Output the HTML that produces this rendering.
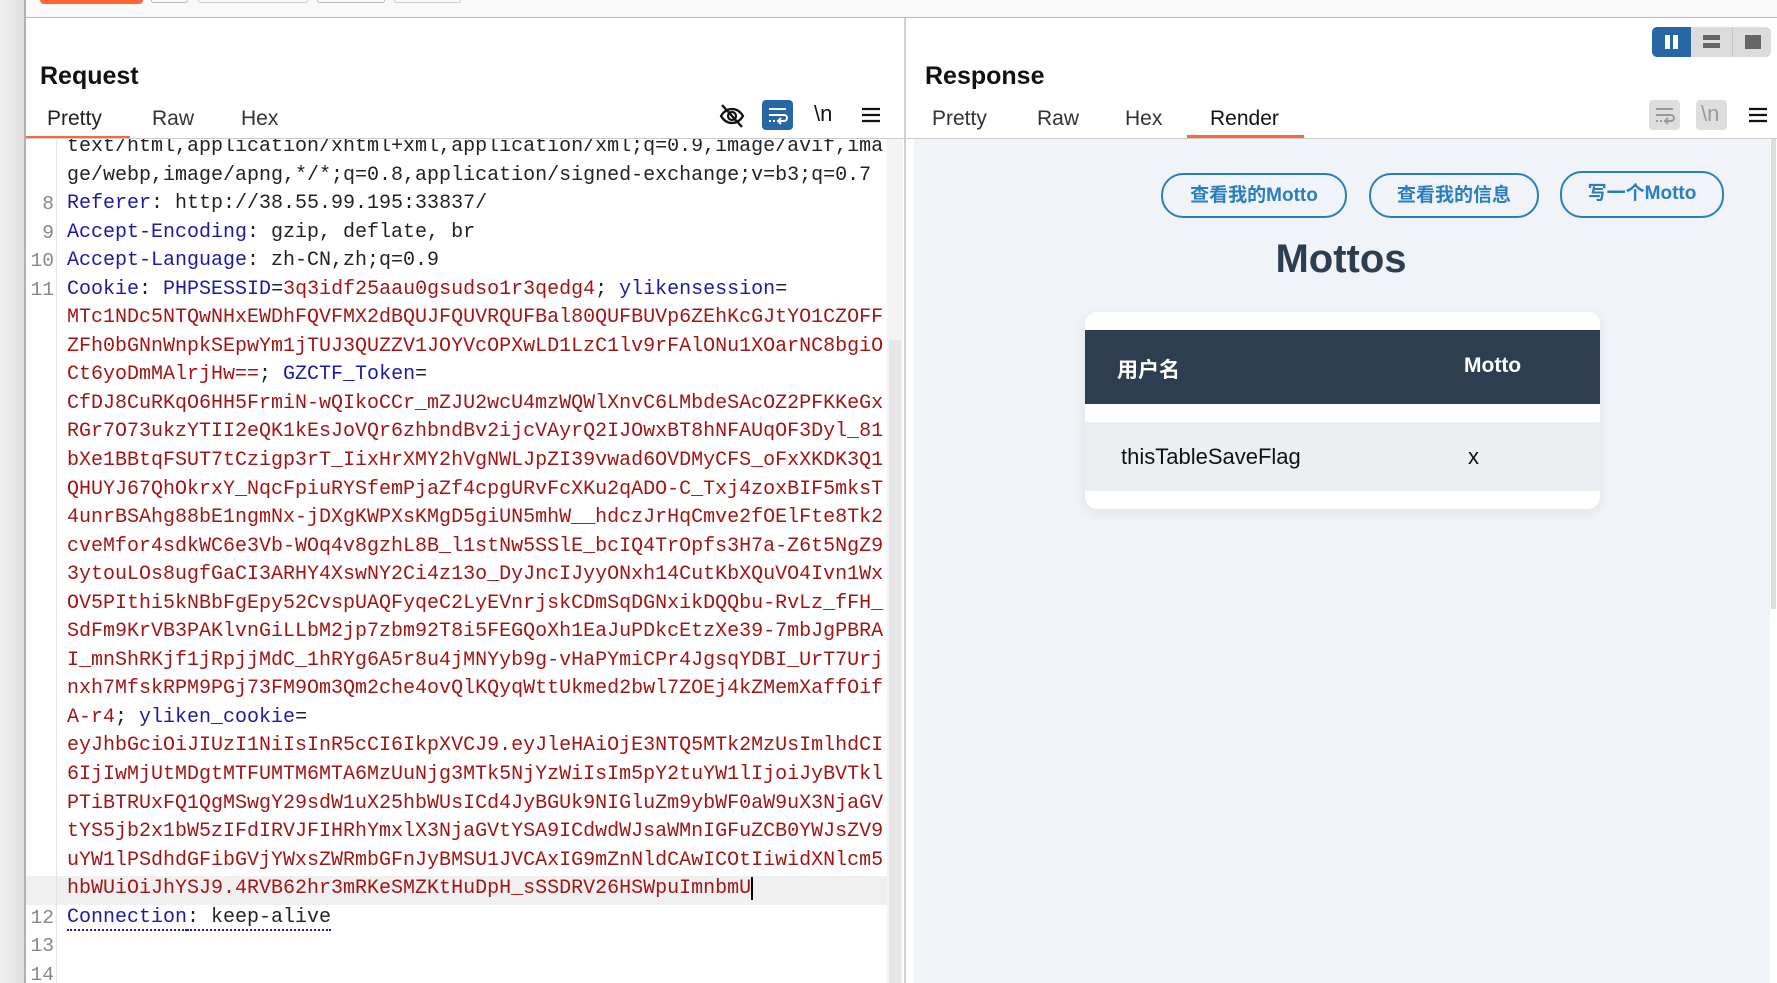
<!DOCTYPE html>
<html><head><meta charset="utf-8"><style>
*{margin:0;padding:0;box-sizing:border-box}
body{width:1777px;height:983px;overflow:hidden;background:#fff;position:relative;font-family:"Liberation Sans","Noto Sans CJK SC",sans-serif}
.a{position:absolute}
.code{font-family:"Liberation Mono","Noto Sans CJK SC",monospace;font-size:20px;line-height:28.55px;white-space:pre;color:#222}
.k{color:#1a1aa8}.v{color:#a31515}
.ln{position:absolute;left:25px;width:28px;text-align:right;color:#888;font-family:"Liberation Mono",monospace;font-size:19.6px;line-height:28.55px}
.tab{position:absolute;font-size:21px;color:#333}
.btn{position:absolute;border:2px solid #2c7dbd;border-radius:22px;color:#2c7dbd;font-weight:bold;font-size:19px;text-align:center;line-height:41px;background:transparent}
</style></head><body>
<div class="a" style="left:0;top:0;width:24px;height:983px;background:linear-gradient(90deg,#f0f0f0,#e0e0e0)"></div>
<div class="a" style="left:24px;top:0;width:2px;height:983px;background:#b0b0b0"></div>
<div class="a" style="left:26px;top:0;width:1751px;height:18px;background:#f9f9f9;border-bottom:1px solid #bbb"></div>
<div class="a" style="left:40px;top:0;width:103px;height:4px;background:#ff6633;border-radius:0 0 4px 4px"></div>
<div class="a" style="left:151px;top:-2px;width:37px;height:5px;border:1px solid #bbb;border-radius:3px"></div>
<div class="a" style="left:198px;top:-2px;width:110px;height:5px;border:1px solid #ccc;border-radius:3px"></div>
<div class="a" style="left:317px;top:-2px;width:68px;height:5px;border:1px solid #bbb;border-radius:3px"></div>
<div class="a" style="left:394px;top:-2px;width:67px;height:5px;border:1px solid #ccc;border-radius:3px"></div>

<div class="a" style="left:40px;top:62px;font-size:25px;font-weight:bold;color:#111">Request</div>
<div class="tab" style="left:47px;top:107px;color:#222">Pretty</div>
<div class="tab" style="left:152px;top:107px">Raw</div>
<div class="tab" style="left:241px;top:107px">Hex</div>
<div class="a" style="left:26px;top:136px;width:104px;height:3px;background:#ff6633"></div>
<div class="a" style="left:26px;top:138px;width:878px;height:1px;background:#ccc"></div>
<svg class="a" style="left:718px;top:103px" width="28" height="26" viewBox="0 0 28 26"><path d="M3 13c3-5 7-7 11-7s8 2 11 7c-3 5-7 7-11 7s-8-2-11-7z" fill="none" stroke="#111" stroke-width="2.2"/><circle cx="14" cy="13" r="4" fill="none" stroke="#111" stroke-width="2.2"/><path d="M4 2l20 22" stroke="#111" stroke-width="2.4"/></svg>
<div class="a" style="left:762px;top:100px;width:31px;height:30px;background:#2767a6;border-radius:4px"></div>
<svg class="a" style="left:762px;top:100px" width="31" height="30" viewBox="0 0 31 30"><path d="M7 9h17M7 15h15a3 3 0 0 1 0 6h-5M19 18l-3 3 3 3M7 21h2M11 21h2" fill="none" stroke="#fff" stroke-width="2"/></svg>
<div class="a" style="left:814px;top:101px;font-size:22px;color:#111">\n</div>
<svg class="a" style="left:862px;top:107px" width="18" height="16"><path d="M0 2h18M0 8h18M0 14h18" stroke="#111" stroke-width="2.2"/></svg>

<div class="a" style="left:26px;top:139px;width:861px;height:844px;overflow:hidden">
 <div class="a" style="left:0;top:737px;width:861px;height:29px;background:#f0f0f0"></div>
 <div class="a" style="left:30px;top:0;width:1px;height:844px;background:#e4e4e4"></div>
 <div class="a" style="left:0;top:-6px">
  <div class="ln" style="left:0;top:57.1px">8</div>
  <div class="ln" style="left:0;top:85.65px">9</div>
  <div class="ln" style="left:0;top:114.2px">10</div>
  <div class="ln" style="left:0;top:142.75px">11</div>
  <div class="ln" style="left:0;top:770.85px">12</div>
  <div class="ln" style="left:0;top:799.4px">13</div>
  <div class="ln" style="left:0;top:827.95px">14</div>
  <div class="code a" style="left:41px;top:0">text/html,application/xhtml+xml,application/xml;q=0.9,image/avif,ima
ge/webp,image/apng,*/*;q=0.8,application/signed-exchange;v=b3;q=0.7
<span class="k">Referer</span>: http://38.55.99.195:33837/
<span class="k">Accept-Encoding</span>: gzip, deflate, br
<span class="k">Accept-Language</span>: zh-CN,zh;q=0.9
<span class="k">Cookie</span>: <span class="k">PHPSESSID</span>=<span class="v">3q3idf25aau0gsudso1r3qedg4</span>; <span class="k">ylikensession</span>=
<span class="v">MTc1NDc5NTQwNHxEWDhFQVFMX2dBQUJFQUVRQUFBal80QUFBUVp6ZEhKcGJtYO1CZOFF
ZFh0bGNnWnpkSEpwYm1jTUJ3QUZZV1JOYVcOPXwLD1LzC1lv9rFAlONu1XOarNC8bgiO
Ct6yoDmMAlrjHw==</span>; <span class="k">GZCTF_Token</span>=
<span class="v">CfDJ8CuRKqO6HH5FrmiN-wQIkoCCr_mZJU2wcU4mzWQWlXnvC6LMbdeSAcOZ2PFKKeGx
RGr7O73ukzYTII2eQK1kEsJoVQr6zhbndBv2ijcVAyrQ2IJOwxBT8hNFAUqOF3Dyl_81
bXe1BBtqFSUT7tCzigp3rT_IixHrXMY2hVgNWLJpZI39vwad6OVDMyCFS_oFxXKDK3Q1
QHUYJ67QhOkrxY_NqcFpiuRYSfemPjaZf4cpgURvFcXKu2qADO-C_Txj4zoxBIF5mksT
4unrBSAhg88bE1ngmNx-jDXgKWPXsKMgD5giUN5mhW__hdczJrHqCmve2fOElFte8Tk2
cveMfor4sdkWC6e3Vb-WOq4v8gzhL8B_l1stNw5SSlE_bcIQ4TrOpfs3H7a-Z6t5NgZ9
3ytouLOs8ugfGaCI3ARHY4XswNY2Ci4z13o_DyJncIJyyONxh14CutKbXQuVO4Ivn1Wx
OV5PIthi5kNBbFgEpy52CvspUAQFyqeC2LyEVnrjskCDmSqDGNxikDQQbu-RvLz_fFH_
SdFm9KrVB3PAKlvnGiLLbM2jp7zbm92T8i5FEGQoXh1EaJuPDkcEtzXe39-7mbJgPBRA
I_mnShRKjf1jRpjjMdC_1hRYg6A5r8u4jMNYyb9g-vHaPYmiCPr4JgsqYDBI_UrT7Urj
nxh7MfskRPM9PGj73FM9Om3Qm2che4ovQlKQyqWttUkmed2bwl7ZOEj4kZMemXaffOif
A-r4</span>; <span class="k">yliken_cookie</span>=
<span class="v">eyJhbGciOiJIUzI1NiIsInR5cCI6IkpXVCJ9.eyJleHAiOjE3NTQ5MTk2MzUsImlhdCI
6IjIwMjUtMDgtMTFUMTM6MTA6MzUuNjg3MTk5NjYzWiIsIm5pY2tuYW1lIjoiJyBVTkl
PTiBTRUxFQ1QgMSwgY29sdW1uX25hbWUsICd4JyBGUk9NIGluZm9ybWF0aW9uX3NjaGV
tYS5jb2x1bW5zIFdIRVJFIHRhYmxlX3NjaGVtYSA9ICdwdWJsaWMnIGFuZCB0YWJsZV9
uYW1lPSdhdGFibGVjYWxsZWRmbGFnJyBMSU1JVCAxIG9mZnNldCAwICOtIiwidXNlcm5
hbWUiOiJhYSJ9.4RVB62hr3mRKeSMZKtHuDpH_sSSDRV26HSWpuImnbmU</span><span style="border-left:2px solid #000"></span>
<span class="k" style="border-bottom:2px dotted #1a1aa8">Connection</span><span style="border-bottom:2px dotted #1a1aa8">: keep-alive</span></div>
 </div>
</div>
<div class="a" style="left:887px;top:139px;width:16px;height:844px;background:#f4f4f4"></div>
<div class="a" style="left:889px;top:340px;width:12px;height:643px;background:#e6e6e6"></div>
<div class="a" style="left:904px;top:18px;width:2px;height:965px;background:#d0d0d0"></div>

<div class="a" style="left:925px;top:62px;font-size:25px;font-weight:bold;color:#111">Response</div>
<div class="tab" style="left:932px;top:107px">Pretty</div>
<div class="tab" style="left:1037px;top:107px">Raw</div>
<div class="tab" style="left:1125px;top:107px">Hex</div>
<div class="tab" style="left:1210px;top:107px;color:#111">Render</div>
<div class="a" style="left:1187px;top:135px;width:117px;height:3px;background:#ff6633"></div>
<div class="a" style="left:906px;top:138px;width:871px;height:1px;background:#ccc"></div>
<div class="a" style="left:1652px;top:27px;width:119px;height:30px;background:#dcdcdc;border-radius:5px"></div>
<div class="a" style="left:1652px;top:27px;width:39px;height:30px;background:#2767a6;border-radius:5px 0 0 5px"></div>
<div class="a" style="left:1665px;top:35px;width:5px;height:14px;background:#fff"></div>
<div class="a" style="left:1673px;top:35px;width:5px;height:14px;background:#fff"></div>
<div class="a" style="left:1732px;top:27px;width:1px;height:30px;background:#c8c8c8"></div>
<div class="a" style="left:1703px;top:35px;width:17px;height:5px;background:#666"></div>
<div class="a" style="left:1703px;top:43px;width:17px;height:5px;background:#666"></div>
<div class="a" style="left:1745px;top:35px;width:16px;height:14px;background:#666"></div>
<div class="a" style="left:1649px;top:100px;width:31px;height:30px;background:#dedede;border-radius:4px"></div>
<svg class="a" style="left:1649px;top:100px" width="31" height="30" viewBox="0 0 31 30"><path d="M7 9h17M7 15h15a3 3 0 0 1 0 6h-5M19 18l-3 3 3 3M7 21h2M11 21h2" fill="none" stroke="#999" stroke-width="2"/></svg>
<div class="a" style="left:1696px;top:100px;width:31px;height:30px;background:#dedede;border-radius:4px"></div>
<div class="a" style="left:1701px;top:101px;font-size:22px;color:#999">\n</div>
<svg class="a" style="left:1749px;top:107px" width="18" height="16"><path d="M0 2h18M0 8h18M0 14h18" stroke="#111" stroke-width="2.2"/></svg>

<div class="a" style="left:914px;top:139px;width:856px;height:844px;background:#f0f4f8"></div>
<div class="a" style="left:1770px;top:139px;width:7px;height:844px;background:#fff"></div>
<div class="a" style="left:1771px;top:139px;width:5px;height:470px;background:#ddd"></div>
<div class="btn" style="left:1161px;top:173px;width:186px;height:45px">查看我的Motto</div>
<div class="btn" style="left:1369px;top:173px;width:170px;height:45px">查看我的信息</div>
<div class="btn" style="left:1560px;top:171px;width:164px;height:47px">写一个Motto</div>
<div class="a" style="left:1141px;top:237px;width:400px;text-align:center;font-size:40px;font-weight:bold;color:#2c3e50">Mottos</div>
<div class="a" style="left:1085px;top:312px;width:515px;height:197px;background:#fff;border-radius:12px;box-shadow:0 3px 12px rgba(0,0,0,0.08);overflow:hidden">
 <div class="a" style="left:0;top:18px;width:515px;height:74px;background:#2c3e50"></div>
 <div class="a" style="left:32px;top:42px;color:#fff;font-weight:bold;font-size:21px">用户名</div>
 <div class="a" style="left:379px;top:42px;color:#fff;font-weight:bold;font-size:21px">Motto</div>
 <div class="a" style="left:0;top:110px;width:515px;height:69px;background:#ebeff1"></div>
 <div class="a" style="left:36px;top:132px;color:#111;font-size:22px">thisTableSaveFlag</div>
 <div class="a" style="left:383px;top:132px;color:#111;font-size:22px">x</div>
</div>
</body></html>
